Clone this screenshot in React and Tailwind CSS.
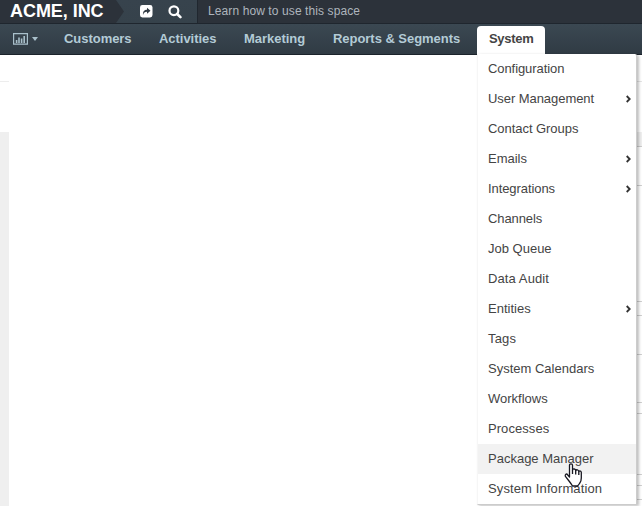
import React from "react";

const NAV = [
  ["Customers", "w-[67px]", "ml-[26px]"],
  ["Activities", "w-[57px]", "ml-[28px]"],
  ["Marketing", "w-[61px]", "ml-[28px]"],
  ["Reports & Segments", "w-[127px]", "ml-[28px]"],
];

const MENU = [
  { label: "Configuration", tracking: "tracking-[-0.08px]" },
  { label: "User Management", tracking: "tracking-[-0.06px]", sub: true },
  { label: "Contact Groups", tracking: "tracking-[-0.05px]" },
  { label: "Emails", sub: true },
  { label: "Integrations", tracking: "tracking-[-0.08px]", sub: true },
  { label: "Channels", tracking: "tracking-[-0.1px]" },
  { label: "Job Queue" },
  { label: "Data Audit", tracking: "tracking-[0.1px]" },
  { label: "Entities", sub: true },
  { label: "Tags", tracking: "tracking-[0.15px]" },
  { label: "System Calendars" },
  { label: "Workflows" },
  { label: "Processes", tracking: "tracking-[0.06px]" },
  { label: "Package Manager", active: true },
  { label: "System Information", tracking: "tracking-[0.12px]" },
];

// Heights of the table rows whose edges show right of the menu
const ROWS = ["h-[39px]", "h-[116px]", "h-[14px]", "h-[39px]", "h-[48px]", "h-[11px]", "h-[61px]", "h-[11px]", "h-[14px]"];

function ChartIcon() {
  return (
    <svg width="15" height="12" viewBox="0 0 15 12" fill="none" stroke="#a9c0cb">
      <path d="M.6.6h13.800v10.600H.6z" strokeWidth="1.200" />
      <path d="M3.600 7v3M6 4.500v5.500M8.600 5.500v4.500M11.200 3v7" strokeWidth="1.600" />
    </svg>
  );
}

function Header() {
  return (
    <header className="flex h-[24px] shrink-0 border-b border-[#1f262e] bg-[#2c323a]">
      <div className="w-[115px] shrink-0 overflow-hidden pl-[10px] text-[18px] font-bold leading-[22px] tracking-[-0.05px] whitespace-nowrap text-white">
        ACME, INC
      </div>
      <div className="relative flex w-[83px] shrink-0 items-center border-r border-[#20272f] bg-linear-to-b from-[#37434d] to-[#36424b]">
        <svg className="absolute top-0 left-0" width="10" height="23" viewBox="0 0 10 23">
          <path d="M0 0h1L9 11.5 1 23H0z" fill="#2c323a" />
        </svg>
        <svg className="ml-[25px]" width="13" height="13" viewBox="0 0 13 13">
          <rect width="12.5" height="12.5" rx="2.4" fill="#fff" />
          <path d="M3 10C2.600 6.500 4.500 4.800 7 4.800V2.800L10.500 5.800 7 8.700V6.800C5 6.800 3.600 7.700 3 10z" fill="#313b44" />
        </svg>
        <svg className="ml-[15px]" width="14" height="14" viewBox="0 0 14 14" fill="none" stroke="#fff">
          <circle cx="5.900" cy="5.700" r="4.400" strokeWidth="2.200" />
          <path d="M9.200 9l3.200 3.200" strokeWidth="2.600" strokeLinecap="round" />
        </svg>
      </div>
      <div className="pl-[10px] text-[12px] leading-[22px] tracking-[0.1px] text-[#aeb5bd]">Learn how to use this space</div>
    </header>
  );
}

export default function App() {
  return (
    <div className="relative flex h-[506px] w-[642px] flex-col overflow-hidden bg-white font-['Liberation_Sans',Arial,sans-serif]">
      <Header />
      <nav className="flex h-[31px] shrink-0 border-b border-[#1b232b] bg-linear-to-b from-[#3b4852] to-[#303b44] text-[13px] leading-[29px] font-bold tracking-[-0.04px] text-[#b3cbd6]">
        <div className="flex w-[38px] shrink-0 items-center pl-[13px]">
          <ChartIcon />
          <span className="ml-[4px] border-x-[3px] border-t-[4px] border-x-transparent border-t-[#a9c0cb]" />
        </div>
        {NAV.map(([label, width, gap]) => (
          <div key={label} className={`${width} ${gap} shrink-0 whitespace-nowrap`}>{label}</div>
        ))}
        <div className="mt-[2px] ml-[17px] h-[29px] w-[68px] shrink-0 rounded-t-[4px] bg-white pl-[12px] leading-[25px] tracking-[-0.3px] text-[#444]">System</div>
      </nav>
      <main className="flex min-h-0 flex-1 justify-between">
        <div className="flex w-[9px] flex-col">
          <div className="h-[27px] border-b border-[#ededed]" />
          <div className="h-[50px]" />
          <div className="flex-1 bg-[#efefef]" />
        </div>
        <div className="flex w-[5px] flex-col">
          <div className="h-[27px] border-b border-[#e5e5e5]" />
          <div className="h-[50px]" />
          <div className="h-[15px] border-b border-[#ccc] bg-[#efefef]" />
          {ROWS.map((height, i) => (
            <div key={i} className={`${height} border-b border-[#d0d0d0]`} />
          ))}
        </div>
      </main>
      <ul className="absolute top-[54px] left-[477px] w-[160px] rounded-tr-[2px] border-r border-b border-l border-[#ccc] border-l-[#f6f6f6] bg-white text-[13px] text-[#444] shadow-[2px_1px_3px_rgba(0,0,0,0.25)]">
        {MENU.map(({ label, tracking = "tracking-normal", sub, active }) => (
          <li key={label} className={`flex h-[30px] items-center justify-between pr-[5px] pl-[10px] ${active ? "bg-[#f2f2f2]" : ""}`}>
            <span className={`whitespace-nowrap ${tracking}`}>{label}</span>
            {sub && (
              <svg width="5" height="8" viewBox="0 0 5 8" fill="none" stroke="#333" strokeWidth="1.800">
                <path d="M.7 1L3.700 4 .7 7" />
              </svg>
            )}
          </li>
        ))}
      </ul>
      <svg className="absolute top-[463px] left-[564px]" width="19" height="24" viewBox="0 0 19 24" fill="#fff" stroke="#171720" strokeWidth="1.300" strokeLinejoin="round">
        <path d="M5.500 14V2.200Q5.500.8 7 .8T8.500 2.200V7Q9 5.800 10.300 6T11.700 7.500Q12.500 6.400 13.700 7T14.800 8.500Q15.800 7.500 16.700 8.300T17.300 10.300V15Q17.300 18 15.800 20 15 21.500 13.500 23H8.500Q7 20.500 5 18L1.400 13.400Q.8 11.800 1.800 11.200T3.800 12z" />
        <path d="M8.500 7v4M11.700 7.500v4M14.800 8.500v3.500" />
      </svg>
    </div>
  );
}
